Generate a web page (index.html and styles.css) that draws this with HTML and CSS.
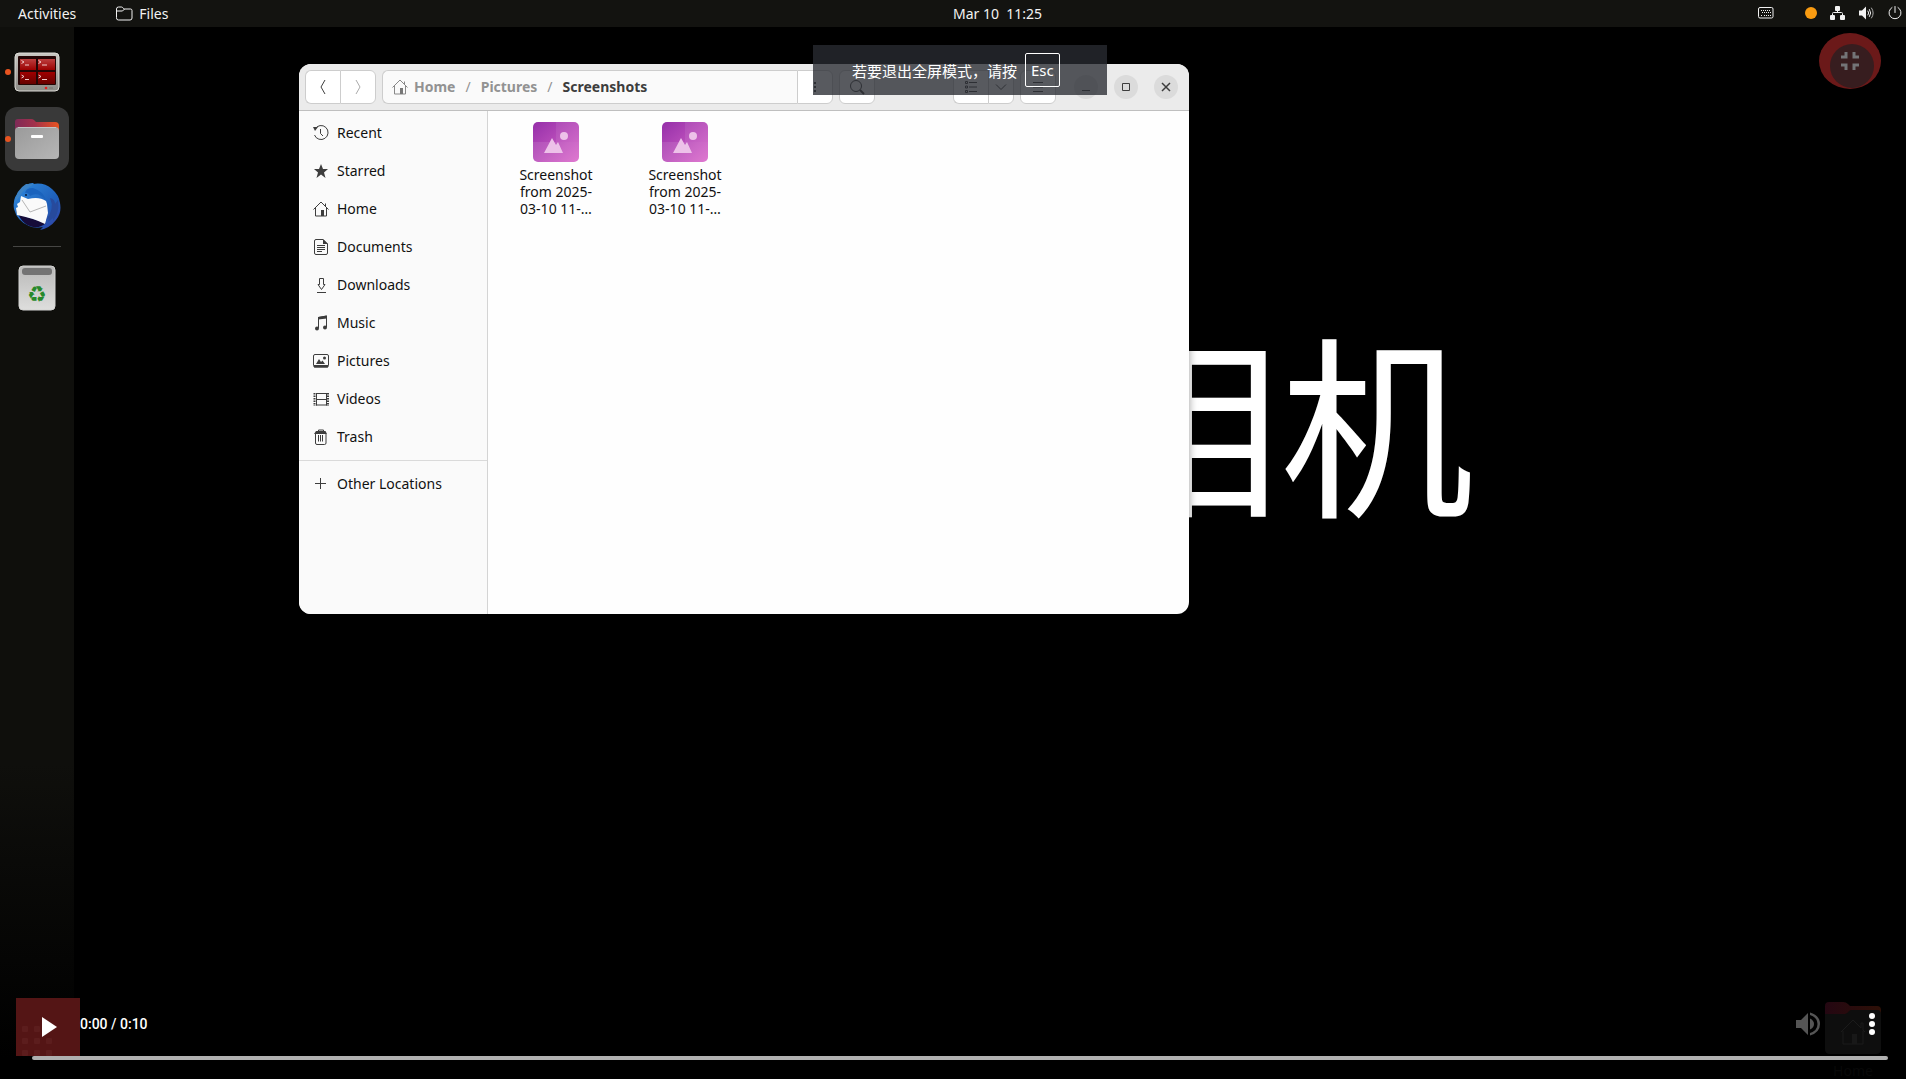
FILE: index.html
```html
<!DOCTYPE html>
<html lang="en">
<head>
    <meta charset="utf-8">
    <title>Files</title>
    <link rel="stylesheet" href="styles.css">
</head>

<body>
    <div class="screen">
        <header class="topbar">
            <div class="topbar-left">
                <button class="top-btn">Activities</button>
                <button class="top-btn files-menu">
                    <svg width="17" height="15" viewBox="0 0 17 15" fill="none" stroke="#f2f2f2"><path d="M.5 11.500V3Q.5 1 2.500 1H5.500Q6.500 1 7.500 2.500L8 3H14.500Q16 3 16 4.500V12Q16 14 14 14H2.500Q.5 14 .5 12ZM.5 5H6.500L8.500 3"/></svg>
                    Files
                </button>
            </div>
            <div class="topbar-right">
                <button class="top-btn clock">Mar 10&nbsp; 11:25</button>
                <div class="status">
                    <svg class="keyboard" width="16" height="12" viewBox="0 0 16 12"><rect x=".5" y=".5" width="14.500" height="10.500" rx="1.500" fill="none" stroke="#f2f2f2"/><path d="M3 3.500h10M4 5.500h9M3 8.500h1.500M6 8.500h5M12 8.500h1" stroke="#f2f2f2" stroke-dasharray="1 1"/></svg>
                    <span class="notice"></span>
                    <svg width="16" height="14" viewBox="0 0 16 14" fill="#f2f2f2"><rect x="5" width="5" height="5" rx="1"/><rect y="9" width="5" height="5" rx="1"/><rect x="10" y="9" width="5" height="5" rx="1"/><path d="M7.500 4V7M2.500 10V7.500Q2.500 6.500 3.500 6.500H11.500Q12.500 6.500 12.500 7.500V10" fill="none" stroke="#f2f2f2"/></svg>
                    <svg width="16" height="14" viewBox="0 0 16 14" fill="none" stroke="#f2f2f2" stroke-linecap="round"><path d="M0 4.500H3L7 .5V13.500L3 9.500H0Z" fill="#f2f2f2" stroke="none"/><path d="M9 5Q10.500 7 9 9"/><path d="M10.500 3.500Q13 7 10.500 10.500"/><path d="M12.500 2Q16 7 12.500 12" stroke="#aaa"/></svg>
                    <svg width="14" height="14" viewBox="0 0 14 14" fill="none" stroke="#f2f2f2" stroke-linecap="round"><path d="M7 .5V6.500M4 1.500A6 6 0 1 0 10 1.500"/></svg>
                </div>
            </div>
        </header>

        <div class="workspace">
            <nav class="dock">
                <button class="dock-item running" aria-label="Terminator">
                    <svg width="46" height="40" viewBox="0 0 46 40">
                        <defs>
                            <linearGradient id="frame" x2="0" y2="1"><stop stop-color="#c9c8c3"/><stop offset="1" stop-color="#8b8a86"/></linearGradient>
                            <linearGradient id="red" x2="0" y2="1"><stop stop-color="#bd3f3f"/><stop offset="1" stop-color="#9b0000"/></linearGradient>
                            <linearGradient id="darkred" x2="0" y2="1"><stop stop-color="#a00000"/><stop offset="1" stop-color="#650000"/></linearGradient>
                        </defs>
                        <rect x="1" y="1" width="44" height="38" rx="4" fill="url(#frame)" stroke="#dddcd7"/>
                        <rect x="4" y="4" width="38" height="29" rx="1" fill="#240606"/>
                        <path d="M6 7H22V18H6ZM24 7H41V18H24Z" fill="url(#red)"/>
                        <path d="M6 20H22V32H6ZM24 20H41V32H24Z" fill="url(#darkred)"/>
                        <path d="M7.500 8.500L10 10L7.500 11.500M11 13H15M24.500 8.500L27 10L24.500 11.500M28 13H33M7.500 23L10 24.500L7.500 26M11 27.500H15M24.500 23L27 24.500L24.500 26M28 27.500H33" fill="none" stroke="#f0caca"/>
                        <circle cx="32" cy="36" r="1.300" fill="#e02020"/><path d="M35 36H39" stroke="#77756f"/>
                    </svg>
                </button>
                <button class="dock-item running active" aria-label="Files">
                    <svg width="44" height="40" viewBox="0 0 44 40">
                        <defs>
                            <linearGradient id="tab"><stop stop-color="#7f2a57"/><stop offset=".45" stop-color="#a3314b"/><stop offset="1" stop-color="#e95420"/></linearGradient>
                            <linearGradient id="drawer" x2="1" y2="1"><stop stop-color="#9a9a9a"/><stop offset="1" stop-color="#b6b6b6"/></linearGradient>
                        </defs>
                        <path d="M0 14V3Q0 0 3 0H16Q18 0 19 1L21 3H40Q44 3 44 7V14Z" fill="url(#tab)"/>
                        <rect y="8" width="44" height="32" rx="4" fill="url(#drawer)"/>
                        <path d="M3 8.500H41" stroke="#c4c4c4"/>
                        <rect x="16" y="16" width="12" height="3" rx="1" fill="#fff"/>
                    </svg>
                </button>
                <button class="dock-item" aria-label="Thunderbird">
                    <svg width="48" height="48" viewBox="0 0 48 48">
                        <defs><linearGradient id="bird" x2="1" y2="1"><stop stop-color="#2f8de0"/><stop offset=".6" stop-color="#1f5fb9"/><stop offset="1" stop-color="#3540a4"/></linearGradient></defs>
                        <path d="M8 8Q14 0 21 1L20 2Q31 0 39 7Q46 13 47 21Q49 31 43 38Q37 46 27 48L30 45Q22 47 16 44Q4 39 1 27Q-1 15 8 8Z" fill="url(#bird)"/>
                        <path d="M3 26Q7 42 20 45Q28 46 33 41L4 32Z" fill="#160c39"/>
                        <path d="M8 14L15 17Q26 14 33 19L34 22L35 31L32 42Q20 36 4 33L3 26L5 25L4 22L7 20Z" fill="#fafafa"/>
                        <path d="M9 18L17 30L33 24" fill="none" stroke="#b5b5b5"/>
                        <path d="M12 11Q15 10 17 14Q25 9 33 18Q30 9 20 6Q13 6 12 11Z" fill="#1a63bd"/>
                        <path d="M13 2Q3 8 2 20L7 14Q9 9 15 6L21 2Z" fill="#3c83c6"/>
                        <path d="M37 16Q42 27 33 38L36 36L35 40L40 36L40 39Q47 30 45 18L42 22Q42 17 37 16Z" fill="#274a9c"/>
                        <circle cx="13" cy="13" r="1" fill="#071b3a"/>
                    </svg>
                </button>
                <div class="dock-line"></div>
                <button class="dock-item" aria-label="Trash">
                    <svg width="38" height="46" viewBox="0 0 38 46">
                        <defs><linearGradient id="bin" x2="0" y2="1"><stop stop-color="#b9b9b8"/><stop offset="1" stop-color="#dededd"/></linearGradient></defs>
                        <rect x="1" y="1" width="36" height="44" rx="4" fill="url(#bin)" stroke="#d2d2d1"/>
                        <rect x="4" y="3" width="30" height="7" rx="3" fill="#737373"/>
                        <text class="recycle" x="19" y="37" text-anchor="middle">♻</text>
                    </svg>
                </button>
            </nav>

            <main class="desktop">
                <div class="banner" lang="zh">相机</div>

                <div class="home-folder">
                    <svg width="56" height="52" viewBox="0 0 56 52">
                        <defs><linearGradient id="dimtab"><stop stop-color="#240712"/><stop offset="1" stop-color="#2e1007"/></linearGradient></defs>
                        <path d="M0 16V4Q0 0 4 0H18Q21 0 23 2L25 4H52Q56 4 56 8V16Z" fill="url(#dimtab)"/>
                        <path d="M0 12H20Q22 12 24 9Q25 8 27 8H52Q56 8 56 12V47Q56 52 51 52H5Q0 52 0 47Z" fill="#0e0e0e"/>
                        <path d="M16 30L28 18L36 26V21H38V28L40 30M18 29V42H38V29" fill="none" stroke="#1b1b1b"/>
                        <path d="M27 32H32V42H27Z" fill="#181818"/>
                    </svg>
                    <span>Home</span>
                </div>

                <section class="window">
                    <div class="headerbar">
                        <div class="linked">
                            <button class="tool" aria-label="Back"><svg width="8" height="16" viewBox="0 0 8 16"><path d="M6 1L2 8L6 15"/></svg></button>
                            <button class="tool faded" aria-label="Forward"><svg width="8" height="16" viewBox="0 0 8 16"><path d="M2 1L6 8L2 15"/></svg></button>
                        </div>
                        <div class="linked pathbar">
                            <div class="crumbs">
                                <a href="#" class="crumb"><svg width="16" height="16" viewBox="0 0 16 16"><path d="M.5 8.500L8 1L15.500 8.500M2.500 7V15H13.500V7M12.500 5V2.500"/><path d="M8 9h3v6H8z" fill="#777" stroke="none"/></svg>Home</a>
                                <span>/</span>
                                <a href="#" class="crumb">Pictures</a>
                                <span>/</span>
                                <a href="#" class="crumb current">Screenshots</a>
                            </div>
                            <button class="tool" aria-label="Path menu"><svg width="4" height="16" viewBox="0 0 4 16"><path d="M1 3h2v2H1zM1 7h2v2H1zM1 11h2v2H1z" fill="#3d3d3d" stroke="none"/></svg></button>
                        </div>
                        <button class="tool search" aria-label="Search"><svg width="16" height="16" viewBox="0 0 16 16"><circle cx="7" cy="7" r="5.500"/><path d="M11 11L15 15" stroke-width="2"/></svg></button>
                        <div class="linked view">
                            <button class="tool" aria-label="List view"><svg width="14" height="14" viewBox="0 0 14 14"><path d="M1.500 1.500h2v2h-2zM1.500 6h2v2h-2zM1.500 10.500h2v2h-2zM5 2.500h8M5 7h8M5 11.500h8"/></svg></button>
                            <button class="tool narrow" aria-label="View options"><svg width="12" height="8" viewBox="0 0 12 8"><path d="M1 1.500L6 6.500L11 1.500"/></svg></button>
                        </div>
                        <button class="tool menu" aria-label="Menu"><svg width="12" height="12" viewBox="0 0 12 12"><path d="M1 1.500h10M1 6h10M1 10.500h10"/></svg></button>
                        <div class="win-btns">
                            <button class="win-btn" aria-label="Minimize"><svg width="10" height="10" viewBox="0 0 10 10"><path d="M1 8.500h8"/></svg></button>
                            <button class="win-btn" aria-label="Maximize"><svg width="10" height="10" viewBox="0 0 10 10"><path d="M1.500 1.500h7v7h-7z"/></svg></button>
                            <button class="win-btn" aria-label="Close"><svg width="10" height="10" viewBox="0 0 10 10"><path d="M1 1L9 9M9 1L1 9" stroke-width="1.500"/></svg></button>
                        </div>
                    </div>

                    <div class="window-body">
                        <aside class="sidebar">
                            <a href="#" class="place"><svg width="16" height="16" viewBox="0 0 16 16"><path d="M2 4A7 7 0 1 1 1.500 10M7.500 4V8.500L10 11"/><path d="M0 2L5 2L2 6Z" fill="#3d3d3d" stroke="none"/></svg>Recent</a>
                            <a href="#" class="place"><svg width="16" height="16" viewBox="0 0 16 16"><path d="M8 1L10 6H15L11 9.500L12.500 15L8 11.500L3.500 15L5 9.500L1 6H6Z" fill="#3d3d3d" stroke="none"/></svg>Starred</a>
                            <a href="#" class="place"><svg width="16" height="16" viewBox="0 0 16 16"><path d="M.5 8.500L8 1L15.500 8.500M2.500 7V15H13.500V7M12.500 5V2.500"/><path d="M8 9h3v6H8z" fill="#3d3d3d" stroke="none"/></svg>Home</a>
                            <a href="#" class="place"><svg width="16" height="16" viewBox="0 0 16 16"><path d="M3 .5H10L14.500 5V14Q14.500 15.500 13 15.500H3Q1.500 15.500 1.500 14V2Q1.500 .5 3 .5ZM4 6.500H12M4 8.500H12M4 10.500H12M4 12.500H9"/><path d="M10 0V5H15Z" fill="#3d3d3d" stroke="none"/></svg>Documents</a>
                            <a href="#" class="place"><svg width="16" height="16" viewBox="0 0 16 16"><path d="M6.500 1.500H10.500V7.500H12L8.500 12.500L5 7.500H6.500ZM4 15.500H13"/></svg>Downloads</a>
                            <a href="#" class="place"><svg width="16" height="16" viewBox="0 0 16 16"><path d="M5.500 13V2.500L13.500 1V12"/><path d="M5 2L14 .5V3.500L5 4.500Z" fill="#3d3d3d" stroke="none"/><circle cx="4" cy="13.500" r="2" fill="#3d3d3d" stroke="none"/><circle cx="12" cy="12.500" r="2" fill="#3d3d3d" stroke="none"/></svg>Music</a>
                            <a href="#" class="place"><svg width="16" height="16" viewBox="0 0 16 16"><rect x=".5" y="1.500" width="15" height="12.500" rx="1.500"/><path d="M1 12h14v2.500H1zM3 11L6 6L8 9L9.500 7.500L12 11Z" fill="#3d3d3d" stroke="none"/><circle cx="11.500" cy="5" r="1.500" fill="#3d3d3d" stroke="none"/></svg>Pictures</a>
                            <a href="#" class="place"><svg width="16" height="16" viewBox="0 0 16 16"><path d="M3.500 2V14.500M13.500 2V14.500M3 2.500H14M3 8.500H14M3 14H14"/><path d="M1.500 2V15M15 2V15" stroke-width="2" stroke-dasharray="1.500 1"/></svg>Videos</a>
                            <a href="#" class="place"><svg width="16" height="16" viewBox="0 0 16 16"><path d="M5.500 3V1H10.500V3M2.500 5V14Q2.500 15.500 4 15.500H11.500Q13 15.500 13 14V5M5.500 6V12.500M7.500 6V12.500M9.500 6V12.500"/><path d="M3 2H12.500L14 5H1Z" fill="#3d3d3d" stroke="none"/></svg>Trash</a>
                            <div class="side-line"></div>
                            <a href="#" class="place"><svg width="16" height="16" viewBox="0 0 16 16"><path d="M7.500 2V13M2 7.500H13"/></svg>Other Locations</a>
                        </aside>

                        <div class="file-grid">
                            <a href="#" class="file">
                                <svg width="46" height="40" viewBox="0 0 46 40">
                                    <defs><linearGradient id="pic" x2="1" y2="1"><stop stop-color="#952fa9"/><stop offset="1" stop-color="#dc6acb"/></linearGradient></defs>
                                    <rect width="46" height="40" rx="5" fill="url(#pic)"/>
                                    <path d="M23 0H41Q46 0 46 5V20H23Z" fill="#fff" opacity=".08"/><path d="M0 20H46V35Q46 40 41 40H5Q0 40 0 35Z" fill="#fff" opacity=".1"/>
                                    <path d="M11 31L19 16L23 23L25 20L30 31Z" fill="#edc1e9"/><circle cx="31" cy="14" r="4" fill="#edc1e9"/>
                                </svg>
                                <span>Screenshot<br>from 2025-<br>03-10 11-…</span>
                            </a>
                            <a href="#" class="file">
                                <svg width="46" height="40" viewBox="0 0 46 40">
                                    <rect width="46" height="40" rx="5" fill="url(#pic)"/>
                                    <path d="M23 0H41Q46 0 46 5V20H23Z" fill="#fff" opacity=".08"/><path d="M0 20H46V35Q46 40 41 40H5Q0 40 0 35Z" fill="#fff" opacity=".1"/>
                                    <path d="M11 31L19 16L23 23L25 20L30 31Z" fill="#edc1e9"/><circle cx="31" cy="14" r="4" fill="#edc1e9"/>
                                </svg>
                                <span>Screenshot<br>from 2025-<br>03-10 11-…</span>
                            </a>
                        </div>
                    </div>
                </section>
            </main>
        </div>

        <div class="toast" lang="zh">若要退出全屏模式，请按<kbd>Esc</kbd></div>

        <button class="exit-full" aria-label="Exit fullscreen">
            <svg width="62" height="56" viewBox="0 0 62 56">
                <ellipse cx="31" cy="28" rx="31" ry="28" fill="#6b1919"/>
                <circle cx="33" cy="33" r="22" fill="#371d1f"/>
                <path d="M22 24H27V19M35 19V24H40M22 32H27V37M35 37V32H40" fill="none" stroke="#737477" stroke-width="3"/>
            </svg>
        </button>

        <div class="controls">
            <div class="control-row">
                <button class="play" aria-label="Play">
                    <svg width="64" height="58" viewBox="0 0 64 58">
                        <g fill="#5c1d1d"><rect x="6" y="28" width="6" height="6" rx="1"/><rect x="18" y="28" width="6" height="6" rx="1"/><rect x="6" y="40" width="6" height="6" rx="1"/><rect x="18" y="40" width="6" height="6" rx="1"/><rect x="30" y="40" width="6" height="6" rx="1"/><rect x="6" y="52" width="6" height="6" rx="1"/><rect x="18" y="52" width="6" height="6" rx="1"/><rect x="30" y="52" width="6" height="6" rx="1"/></g>
                        <path d="M26 19L41 29L26 39Z" fill="#fff"/>
                    </svg>
                </button>
                <span class="time">0:00 / 0:10</span>
                <button class="plain" aria-label="Mute">
                    <svg width="24" height="24" viewBox="0 0 24 24" fill="#555"><path d="M0 8V16H5L12 23V1L5 8ZM14 6.500V17.500Q18 15.500 18 12T14 6.500ZM14 .5V3Q21.500 5.500 21.500 12T14 21V23.500Q24 20.500 24 12T14 .5Z"/></svg>
                </button>
                <button class="plain more" aria-label="More options">
                    <svg width="6" height="22" viewBox="0 0 6 22" fill="#fff"><circle cx="3" cy="3" r="3"/><circle cx="3" cy="11" r="3"/><circle cx="3" cy="19" r="3"/></svg>
                </button>
            </div>
            <input type="range" class="seek" min="0" max="10" value="0" aria-label="Seek">
        </div>
    </div>
</body>
</html>
```
FILE: styles.css
```css
* {
    box-sizing: border-box;
}

body {
    margin: 0;
    background: #000;
    font-family: "Noto Sans", "Noto Sans CJK SC", sans-serif;
    font-size: 14px;
}

button {
    padding: 0;
    border: 0;
    background: none;
    font: inherit;
    color: inherit;
}

a {
    color: inherit;
    text-decoration: none;
}

svg {
    display: block;
    flex: none;
}

.screen {
    position: relative;
    display: flex;
    flex-direction: column;
    min-height: 100vh;
    overflow: hidden;
}

/* top panel */
.topbar {
    display: grid;
    grid-template-columns: 1fr 1fr;
    height: 27px;
    padding-bottom: 1px;
    background: #131310;
    color: #f2f2f2;
}

.topbar-left,
.topbar-right {
    display: flex;
    align-items: center;
}

.topbar-left {
    gap: 40px;
    padding-left: 18px;
}

.topbar-right {
    justify-content: space-between;
    padding-right: 4px;
}

.files-menu {
    display: flex;
    align-items: center;
    gap: 6px;
}

.status {
    display: flex;
    align-items: center;
    gap: 13px;
}

.keyboard {
    margin-right: 18px;
}

.notice {
    width: 12px;
    height: 12px;
    border-radius: 50%;
    background: #f99b11;
}

.workspace {
    flex: 1;
    display: flex;
}

/* dock */
.dock {
    width: 74px;
    padding-top: 13px;
    display: flex;
    flex-direction: column;
    align-items: center;
    gap: 3px;
    background: linear-gradient(#0f0f0c 70%, #000 98%);
}

.dock-item {
    position: relative;
    width: 64px;
    height: 64px;
    display: flex;
    align-items: center;
    justify-content: center;
    border-radius: 12px;
}

.active {
    background: #393939;
}

.running::before {
    content: "";
    position: absolute;
    left: 0;
    top: 29px;
    width: 6px;
    height: 6px;
    border-radius: 50%;
    background: #e95420;
}

.dock-line {
    width: 48px;
    height: 1px;
    margin: 5px 0 6px;
    background: #464644;
}

.recycle {
    fill: #26892a;
    font-family: "DejaVu Sans", sans-serif;
    font-size: 22px;
    font-weight: 400;
}

/* desktop */
.desktop {
    flex: 1;
    position: relative;
}

.banner {
    position: absolute;
    left: 1012px;
    top: 248px;
    color: #fff;
    font-family: "Noto Sans CJK SC", sans-serif;
    font-size: 194px;
    font-weight: 400;
    line-height: 288px;
    white-space: nowrap;
}

.home-folder {
    position: absolute;
    right: 25px;
    bottom: 0;
    display: flex;
    flex-direction: column;
    align-items: center;
    gap: 8px;
    color: #080808;
    line-height: 17px;
}

.window {
    position: absolute;
    left: 225px;
    top: 37px;
    width: 890px;
    height: 550px;
    display: flex;
    flex-direction: column;
    border-radius: 12px;
    overflow: hidden;
    background: #fefefe;
    box-shadow: 0 2px 8px rgba(0, 0, 0, 0.4);
    color: #111;
}

.headerbar {
    height: 47px;
    display: flex;
    align-items: center;
    padding: 0 11px 0 6px;
    background: #ebebeb;
    border-bottom: 1px solid #bfbfbf;
}

.headerbar svg,
.place svg {
    fill: none;
    stroke: #3d3d3d;
}

.linked {
    display: flex;
}

.tool {
    width: 36px;
    height: 34px;
    display: flex;
    align-items: center;
    justify-content: center;
    background: #fff;
    border: 1px solid #cdcdcd;
    border-radius: 6px;
}

.linked .tool:first-child {
    width: 35px;
    border-right: 0;
    border-radius: 6px 0 0 6px;
}

.linked .tool:last-child {
    border-radius: 0 6px 6px 0;
}

.linked .narrow {
    width: 26px;
}

.faded svg {
    stroke: #aaa;
}

.pathbar {
    flex: 1;
    margin: 0 6px;
}

.crumbs {
    flex: 1;
    display: flex;
    align-items: center;
    gap: 10px;
    padding: 0 0 1px 9px;
    background: #fafafa;
    border: 1px solid #cdcdcd;
    border-right: 0;
    border-radius: 6px 0 0 6px;
    color: #929292;
}

.crumb {
    display: flex;
    align-items: center;
    gap: 6px;
    font-weight: 700;
}

.crumb svg {
    stroke: #888;
}

.current {
    color: #3d3d3d;
}

.view {
    margin: 0 6px 0 78px;
}

.win-btns {
    display: flex;
    gap: 16px;
    margin-left: 18px;
}

.win-btn {
    width: 24px;
    height: 24px;
    display: flex;
    align-items: center;
    justify-content: center;
    border-radius: 50%;
    background: #dbdbdb;
}

.window-body {
    flex: 1;
    display: flex;
}

.sidebar {
    width: 189px;
    padding-top: 3px;
    background: #fafafa;
    border-right: 1px solid #d4d4d4;
}

.place {
    height: 38px;
    display: flex;
    align-items: center;
    gap: 8px;
    padding: 0 0 1px 14px;
}

.side-line {
    height: 1px;
    margin: 4px 0;
    background: #dadada;
}

.file-grid {
    flex: 1;
    display: flex;
    align-items: flex-start;
    gap: 29px;
    padding: 11px 18px;
}

.file {
    width: 100px;
    display: flex;
    flex-direction: column;
    align-items: center;
    gap: 4px;
    line-height: 17px;
    text-align: center;
}

/* browser hint over the page */
.toast {
    position: absolute;
    left: 813px;
    top: 45px;
    width: 294px;
    height: 50px;
    display: flex;
    align-items: center;
    gap: 8px;
    padding-left: 39px;
    background: rgba(41, 44, 50, 0.78);
    color: #fff;
    font-family: "Noto Sans CJK SC", sans-serif;
    font-size: 15px;
}

kbd {
    height: 34px;
    padding: 0 5px;
    border: 1px solid #fff;
    border-radius: 2px;
    font-family: "Noto Sans", sans-serif;
    line-height: 32px;
}

.exit-full {
    position: absolute;
    right: 25px;
    top: 33px;
}

/* video controls */
.controls {
    position: absolute;
    left: 0;
    right: 0;
    bottom: 0;
    padding: 0 18px 19px 16px;
    color: #fff;
}

.control-row {
    display: flex;
    align-items: center;
}

.play {
    background: #541515;
}

.time {
    flex: 1;
    padding-bottom: 6px;
    font-family: Roboto, sans-serif;
    font-size: 14px;
    font-weight: 500;
}

.plain {
    padding-bottom: 6px;
}

.more {
    margin: 0 13px 0 49px;
}

.seek {
    appearance: none;
    display: block;
    width: calc(100% - 16px);
    height: 4px;
    margin: 0 0 0 16px;
    border-radius: 2px;
    background: #b0b0b0;
}

.seek::-webkit-slider-thumb {
    appearance: none;
    width: 0;
    height: 0;
}
```
